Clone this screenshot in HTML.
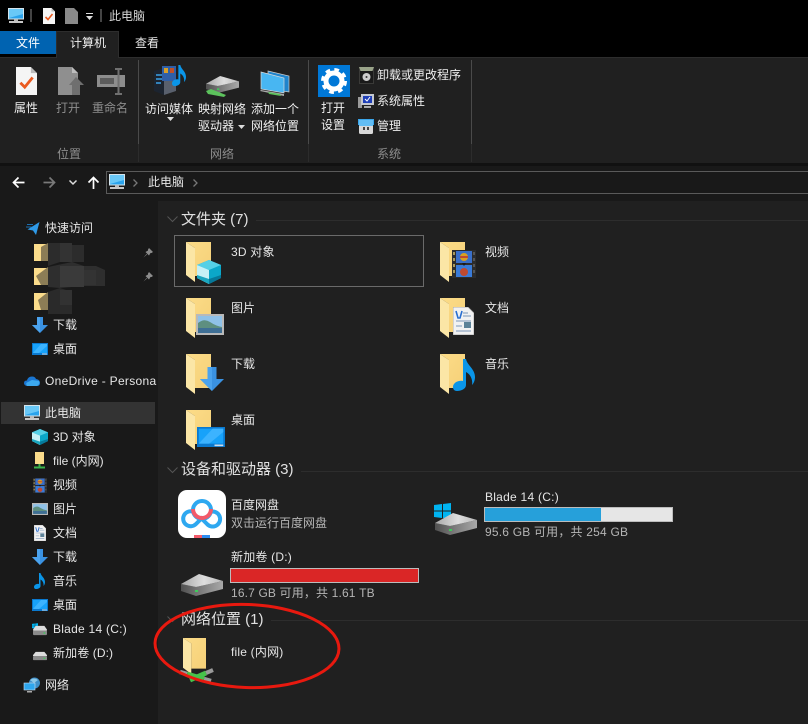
<!DOCTYPE html>
<html lang="zh"><head><meta charset="utf-8"><title>此电脑</title>
<style>
html,body{margin:0;padding:0;background:#191919;}
#r{position:relative;width:808px;height:724px;overflow:hidden;background:#191919;font-family:"Liberation Sans","Noto Sans CJK SC",sans-serif;font-size:12px;color:#e6e6e6;}
#r div{position:absolute;}
.t{line-height:16px;white-space:nowrap;}
.c{transform:translateX(-50%);text-align:center;}
.g{color:#8d8d8d;}
.h{font-size:15px;line-height:18px;white-space:nowrap;color:#e0e0e0;}
svg{position:absolute;overflow:visible;}
</style></head><body><div id="r">
<svg width="0" height="0" style="left:0;top:0">
<defs>
<linearGradient id="fg" x1="0" y1="0" x2="1" y2="1"><stop offset="0" stop-color="#fcdc88"/><stop offset="1" stop-color="#f5d078"/></linearGradient>
<linearGradient id="dt" x1="0" y1="0" x2="1" y2="0"><stop offset="0" stop-color="#a8a8a8"/><stop offset=".55" stop-color="#dedede"/><stop offset="1" stop-color="#b8b8b8"/></linearGradient>
<linearGradient id="df" x1="0" y1="0" x2="1" y2="0"><stop offset="0" stop-color="#505050"/><stop offset=".5" stop-color="#7e7e7e"/><stop offset="1" stop-color="#a8a8a8"/></linearGradient>
<symbol id="folder" viewBox="0 0 25 40" overflow="visible">
<path d="M0 0H25V34H9V6Z" fill="url(#fg)"/><path d="M0 0L9 6V40L0 33Z" fill="#fbe6a6"/>
</symbol>
<symbol id="mon" viewBox="0 0 16 16">
<rect x="0.5" y="0.5" width="15" height="10.5" fill="#2aa3ec" stroke="#d5e4ec"/><path d="M1 1H15V6L1 10Z" fill="#69c8f7"/><rect x="6" y="11" width="4" height="2" fill="#bbb"/><rect x="1" y="13" width="14" height="2" fill="#c8c8c8"/>
</symbol>
<symbol id="doc" viewBox="0 0 12 16">
<path d="M0 0H8.5L12 3.5V16H0Z" fill="#f5f5f5"/><path d="M8.5 0L12 3.5H8.5Z" fill="#bbb"/><path d="M2.5 9L5 11.5L9.5 6" fill="none" stroke="#ea5a20" stroke-width="1.6"/>
</symbol>
<symbol id="down" viewBox="0 0 16 16">
<path d="M5 0H11V8H16L8 16L0 8H5Z" fill="#3a92e2"/><path d="M5 0H8V16L0 8H5Z" fill="#4ba3ee"/>
</symbol>
<symbol id="desk" viewBox="0 0 16 12">
<rect width="16" height="12" fill="#0a79cf"/><rect x="1" y="1" width="14" height="9" fill="#17a2fa"/><path d="M9 1H15V3L7 10H1Z" fill="#3cb3ff"/><rect x="10" y="10.5" width="5" height="1" fill="#cde"/>
</symbol>
<symbol id="drive" viewBox="0 0 42 22">
<path d="M0 10V17L15 22L42 15V7L15 13Z" fill="url(#df)"/><path d="M0 10L18 0L42 7L15 13Z" fill="url(#dt)"/><rect x="14" y="16" width="3" height="2" fill="#3ecb5a"/>
</symbol>
<symbol id="cube" viewBox="0 0 24 24">
<path d="M12 0L24 5V18L12 24L0 18V5Z" fill="#0ba7c9"/><path d="M12 0L24 5L12 10L0 5Z" fill="#55d0e6"/><path d="M0 5L12 10V24L0 18Z" fill="#c6f1f6"/><path d="M12 19L24 15V18L12 24Z" fill="#06799a"/><path d="M0 15L12 19V24L0 18Z" fill="#1aa7c0"/>
</symbol>
<symbol id="pic" viewBox="0 0 28 21">
<rect width="28" height="21" fill="#b9b9b9"/><rect x="2" y="2" width="24" height="17" fill="#8fc1e8"/><path d="M2 9Q8 4 14 8T26 13V19H2Z" fill="#5e8f80"/><rect x="2" y="14" width="24" height="5" fill="#3f6f95"/>
</symbol>
<symbol id="film" viewBox="0 0 24 28">
<rect width="24" height="28" fill="#2c2c2c"/><rect x="4" y="1" width="16" height="12" fill="#3a6fc8"/><rect x="4" y="15" width="16" height="12" fill="#3a7bd8"/><circle cx="12" cy="7" r="4" fill="#d9a020"/><path d="M8 7H16" stroke="#c04a30" stroke-width="2"/><circle cx="12" cy="22" r="4" fill="#c04a30"/><path d="M10 13L12 16L14 13Z" fill="#1a1a1a"/><path d="M1 2h2v3H1zM1 8h2v3H1zM1 14h2v3H1zM1 20h2v3H1z" fill="#aa9a5c"/><path d="M21 2h2v3h-2zM21 8h2v3h-2zM21 14h2v3h-2zM21 20h2v3h-2z" fill="#555"/>
</symbol>
<symbol id="note" viewBox="0 0 22 32">
<path d="M10 0H13C14 6 22 10 22 18C22 21 21 24 19 26C20 20 17 15 13 13V26C13 30 8 32 4 32C1 32 0 30 0 28C0 24 5 21 10 22Z" fill="#0a95e8"/>
</symbol>
<symbol id="text" viewBox="0 0 21 28">
<path d="M0 0H15L21 6V28H0Z" fill="#f2f2f2" stroke="#999" stroke-width=".7"/><path d="M3 4L5 11H7L9 4" fill="none" stroke="#2a6fd0" stroke-width="1.6"/><path d="M10 6H15M10 9H18M3 14H18M3 24H18M3 19H9" stroke="#7a96b8"/><rect x="11" y="15" width="7" height="6" fill="#5c8298"/>
</symbol>
<symbol id="win" viewBox="0 0 17 16">
<path d="M0 2L8 1V7.500H0ZM9 1L17 0V7.500H9ZM0 8.500H8V15L0 14ZM9 8.500H17V16L9 15Z" fill="#00b4f1"/>
</symbol>
<symbol id="pin" viewBox="0 0 10 10">
<path d="M6 0L10 4L8.500 5L7.500 5L6 7.500L2.500 4L5 2.500V1.500Z M3.500 6L0.500 9.500L4 6.500Z" fill="#8c8c8c"/>
</symbol>
<symbol id="disk" viewBox="0 0 16 12">
<path d="M0 5L3 1H13L16 5V6H0Z" fill="#dcdcdc"/><rect y="6" width="16" height="5" rx="1" fill="#8a8a8a"/><rect x="12" y="8" width="2" height="1.500" fill="#3ecb5a"/>
</symbol>
</defs></svg>

<!-- title bar -->
<div style="left:0;top:0;width:808px;height:57px;background:#000"></div>
<svg style="left:8px;top:8px" width="16" height="16"><use href="#mon"/></svg>
<div style="left:30px;top:9px;width:2px;height:13px;background:#444"></div>
<svg style="left:43px;top:8px" width="12" height="16"><use href="#doc"/></svg>
<svg style="left:65px;top:8px" width="13" height="16"><path d="M0 0H9L13 4V16H0Z" fill="#8a8a8a"/></svg>
<div style="left:86px;top:13px;width:7px;height:1px;background:#ddd"></div>
<svg style="left:86px;top:16px" width="7" height="4"><path d="M0 0H7L3.500 4Z" fill="#ddd"/></svg>
<div style="left:100px;top:9px;width:2px;height:13px;background:#444"></div>
<div class="t" style="left:109px;top:8px;color:#d8d8d8">此电脑</div>
<!-- tabs -->
<div style="left:0;top:31px;width:56px;height:23px;background:#0063b1"></div>
<div class="t" style="left:16px;top:35px;color:#fff">文件</div>
<div style="left:56px;top:31px;width:63px;height:27px;background:#202020;border:1px solid #2d2d2d;border-bottom:0;box-sizing:border-box"></div>
<div class="t" style="left:70px;top:35px;color:#f0f0f0">计算机</div>
<div class="t" style="left:135px;top:35px;color:#e8e8e8">查看</div>
<!-- ribbon -->
<div style="left:0;top:57px;width:808px;height:108px;background:#202020;border-top:1px solid #2d2d2d;box-sizing:border-box"></div>
<div style="left:57px;top:57px;width:61px;height:1px;background:#202020"></div>
<div style="left:0;top:163px;width:808px;height:3px;background:#111"></div>
<div style="left:138px;top:60px;width:1px;height:84px;background:#4a4a4a"></div>
<div style="left:138px;top:144px;width:1px;height:18px;background:#2c2c2c"></div>
<div style="left:308px;top:60px;width:1px;height:84px;background:#4a4a4a"></div>
<div style="left:308px;top:144px;width:1px;height:18px;background:#2c2c2c"></div>
<div style="left:471px;top:60px;width:1px;height:84px;background:#4a4a4a"></div>
<div style="left:471px;top:144px;width:1px;height:18px;background:#2c2c2c"></div>

<svg style="left:16px;top:67px" width="21" height="28" viewBox="0 0 12 16" preserveAspectRatio="none"><use href="#doc" width="12" height="16"/></svg>
<div class="t c" style="left:26px;top:100px;color:#eee">属性</div>
<svg style="left:58px;top:67px" width="27" height="29"><path d="M0 0H14L20 6V28H0Z" fill="#8f8f8f"/><path d="M14 0L20 6H14Z" fill="#bdbdbd"/><path d="M11 18L18 10L26 18H22V28H14V18Z" fill="#6f6f6f"/></svg>
<div class="t c g" style="left:68px;top:100px">打开</div>
<svg style="left:97px;top:68px" width="29" height="27"><rect y="7" width="28" height="12" fill="#8d8d8d"/><rect x="3" y="10" width="14" height="6" fill="#5c5c5c"/><path d="M18 1H25M21.500 1V26M18 26H25" stroke="#707070" stroke-width="2" fill="none"/></svg>
<div class="t c g" style="left:110px;top:100px">重命名</div>

<svg style="left:154px;top:65px" width="32" height="31"><path d="M0 6L10 3V30L0 26Z" fill="#1c2430"/><path d="M10 3L22 8V26L10 30Z" fill="#59606d"/><path d="M2 10H8M2 14H8M2 18H7" stroke="#3aa2e8" stroke-width="1.500"/><rect x="8" y="1" width="14" height="15" fill="#2e5fa8"/><rect x="10" y="3" width="4" height="5" fill="#d8a028"/><rect x="16" y="3" width="4" height="5" fill="#c05028"/><svg x="18" y="0" width="14" height="21" viewBox="0 0 22 32" preserveAspectRatio="none"><use href="#note" width="22" height="32"/></svg></svg>
<div class="t c" style="left:169px;top:101px;color:#eee">访问媒体</div>
<svg style="left:167px;top:117px" width="7" height="4"><path d="M0 0H7L3.500 4Z" fill="#ddd"/></svg>

<svg style="left:206px;top:76px" width="33" height="21"><svg width="33" height="17" viewBox="0 0 42 22" preserveAspectRatio="none"><use href="#drive" width="42" height="22"/></svg><path d="M0 15L5 13L20 19L18 21L2 18Z" fill="#5cc25c"/></svg>
<div class="t c" style="left:222px;top:101px;color:#eee">映射网络</div>
<div class="t" style="left:198px;top:118px;color:#eee">驱动器</div>
<svg style="left:238px;top:125px" width="7" height="4"><path d="M0 0H7L3.500 4Z" fill="#ddd"/></svg>

<svg style="left:260px;top:70px" width="30" height="26"><path d="M8 1L29 6V22L8 19Z" fill="#1f84cc" stroke="#ccc" stroke-width=".7"/><path d="M1 2L24 8V23L1 19Z" fill="#48b6f2" stroke="#d8d8d8" stroke-width=".7"/><path d="M1 20L24 24V26L0 21Z" fill="#aaa"/><path d="M8 22L20 24L21 26L9 24Z" fill="#5cc25c"/></svg>
<div class="t c" style="left:275px;top:101px;color:#eee">添加一个</div>
<div class="t c" style="left:275px;top:118px;color:#eee">网络位置</div>

<div class="t c g" style="left:69px;top:146px">位置</div>
<div class="t c g" style="left:222px;top:146px">网络</div>
<div class="t c g" style="left:389px;top:146px">系统</div>

<div style="left:318px;top:65px;width:32px;height:32px;background:#0078d7"></div>
<svg style="left:318px;top:65px" width="32" height="32"><circle cx="16" cy="16" r="8" fill="none" stroke="#fff" stroke-width="5"/><circle cx="16" cy="16" r="11" fill="none" stroke="#fff" stroke-width="4" stroke-dasharray="4.500 4.140"/></svg>
<div class="t c" style="left:333px;top:100px;color:#f0f0f0">打开</div>
<div class="t c" style="left:333px;top:117px;color:#f0f0f0">设置</div>
<svg style="left:359px;top:67px" width="15" height="17"><rect width="15" height="17" fill="#3a3a38"/><path d="M0 0H15L13 5H2Z" fill="#9aa48a"/><rect x="1" y="4" width="13" height="12" fill="#1a1a1a"/><circle cx="7.500" cy="10" r="4" fill="#ccc"/><circle cx="7.500" cy="10" r="1" fill="#333"/></svg>
<div class="t" style="left:377px;top:67px;color:#eee">卸载或更改程序</div>
<svg style="left:358px;top:94px" width="16" height="15"><rect x="0" y="3" width="4" height="11" fill="#9a9a9a"/><rect x="3" y="0" width="13" height="11" fill="#c4c8d0"/><rect x="5" y="2" width="9" height="7" fill="#1f3fb8"/><path d="M7 5L9 7L12 3" stroke="#fff" fill="none"/><rect x="6" y="12" width="7" height="2" fill="#aaa"/></svg>
<div class="t" style="left:377px;top:93px;color:#eee">系统属性</div>
<svg style="left:358px;top:119px" width="16" height="15"><rect width="16" height="6" fill="#3aa5ea"/><rect x="1" y="5" width="14" height="10" rx="1.500" fill="#d8d8d8"/><rect x="1" y="1" width="14" height="6" fill="#62bdf4"/><rect x="5" y="8" width="2" height="3" fill="#444"/><rect x="9" y="8" width="2" height="3" fill="#444"/></svg>
<div class="t" style="left:377px;top:118px;color:#eee">管理</div>

<!-- nav bar -->
<svg style="left:12px;top:176px" width="13" height="13"><path d="M12.500 6.500H2M6.500 1.500L1.500 6.500L6.500 11.500" fill="none" stroke="#fff" stroke-width="1.700"/></svg>
<svg style="left:43px;top:176px" width="13" height="13"><path d="M0.500 6.500H11M6.500 1.500L11.500 6.500L6.500 11.500" fill="none" stroke="#7a7a7a" stroke-width="1.700"/></svg>
<svg style="left:69px;top:180px" width="8" height="5"><path d="M0.500 0.500L4 4L7.500 0.500" fill="none" stroke="#ddd" stroke-width="1.500"/></svg>
<svg style="left:87px;top:176px" width="13" height="13"><path d="M6.500 13V2M1.500 6.500L6.500 1.500L11.500 6.500" fill="none" stroke="#fff" stroke-width="1.700"/></svg>
<div style="left:106px;top:171px;width:703px;height:23px;background:#191919;border:1px solid #5a5a5a;box-sizing:border-box"></div>
<svg style="left:109px;top:174px" width="16" height="16"><use href="#mon"/></svg>
<svg style="left:133px;top:179px" width="5" height="8"><path d="M0.500 0.500L4 4L0.500 7.500" fill="none" stroke="#777" stroke-width="1.300"/></svg>
<div class="t" style="left:148px;top:174px">此电脑</div>
<svg style="left:193px;top:179px" width="5" height="8"><path d="M0.500 0.500L4 4L0.500 7.500" fill="none" stroke="#777" stroke-width="1.300"/></svg>

<!-- content bg -->
<div style="left:158px;top:201px;width:650px;height:523px;background:#202020"></div>

<!-- sidebar -->
<svg style="left:26px;top:222px" width="14" height="13"><path d="M13.500 0L10 13L7 8.500L1.500 7.500Z" fill="#2f9ae8"/><path d="M7 2.500H1M5.500 5H0" stroke="#1d6fb0"/></svg>
<div class="t" style="left:45px;top:220px">快速访问</div>

<!-- pixelated redaction -->
<svg style="left:0;top:0" width="110" height="320">
<path d="M34 244H48V261H34ZM34 268H48V285H34ZM34 293H48V310H34Z" fill="#fbdc8b"/>
<path d="M48 243L41 247V261H48ZM48 267L36 276L41 285H48ZM48 292L38 300L41 310H48Z" fill="#8c7d56"/>
<path d="M48 243H72V245H84V262H60L48 266Z" fill="#2c2c2c"/>
<path d="M60 243H72V262H60Z" fill="#333"/>
<path d="M48 267L72 262L84 266H96L105 270V286H84L60 288L48 287Z" fill="#2e2e2e"/>
<path d="M60 266H84V287H60Z" fill="#3a3a3a"/>
<path d="M84 270H96V285H84Z" fill="#333"/>
<path d="M48 292L60 288L72 292V314H48Z" fill="#2a2a2a"/>
<path d="M60 290H72V305H60Z" fill="#323232"/>
</svg>

<svg style="left:143px;top:248px" width="10" height="10"><use href="#pin"/></svg>
<svg style="left:143px;top:272px" width="10" height="10"><use href="#pin"/></svg>
<svg style="left:32px;top:317px" width="16" height="16"><use href="#down"/></svg>
<div class="t" style="left:53px;top:317px">下载</div>
<svg style="left:32px;top:343px" width="16" height="12"><use href="#desk"/></svg>
<div class="t" style="left:53px;top:341px">桌面</div>
<svg style="left:24px;top:375px" width="16" height="11"><path d="M3 11Q0 10.500 0 8Q0 5.500 3 5.500Q4 1.500 8 1.500Q11 1.500 12 4Q16 4.500 16 8Q16 11 13 11Z" fill="#1a76d2"/><path d="M3 11Q1 8 4 7L8 5L15 6Q16.500 9 13 11Z" fill="#3ca8ee"/></svg>
<div class="t" style="left:45px;top:373px;width:112px;overflow:hidden;letter-spacing:.3px">OneDrive - Personal</div>
<div style="left:1px;top:402px;width:154px;height:22px;background:#333"></div>
<svg style="left:24px;top:405px" width="16" height="16"><use href="#mon"/></svg>
<div class="t" style="left:45px;top:405px">此电脑</div>
<svg style="left:32px;top:429px" width="16" height="16"><use href="#cube"/></svg>
<div class="t" style="left:53px;top:429px">3D 对象</div>
<svg style="left:34px;top:452px" width="12" height="17"><rect x="1" y="0" width="9" height="12" fill="#fbdc8b"/><path d="M5.500 12V15M0 15.500H11" stroke="#3cb44a" stroke-width="2"/></svg>
<div class="t" style="left:53px;top:453px">file (内网)</div>
<svg style="left:33px;top:478px" width="14" height="15" viewBox="0 0 24 28" preserveAspectRatio="none"><use href="#film" width="24" height="28"/></svg>
<div class="t" style="left:53px;top:477px">视频</div>
<svg style="left:32px;top:503px" width="16" height="12" viewBox="0 0 28 21" preserveAspectRatio="none"><use href="#pic" width="28" height="21"/></svg>
<div class="t" style="left:53px;top:501px">图片</div>
<svg style="left:34px;top:525px" width="12" height="16" viewBox="0 0 21 28" preserveAspectRatio="none"><use href="#text" width="21" height="28"/></svg>
<div class="t" style="left:53px;top:525px">文档</div>
<svg style="left:32px;top:549px" width="16" height="16"><use href="#down"/></svg>
<div class="t" style="left:53px;top:549px">下载</div>
<svg style="left:34px;top:573px" width="11" height="16" viewBox="0 0 22 32" preserveAspectRatio="none"><use href="#note" width="22" height="32"/></svg>
<div class="t" style="left:53px;top:573px">音乐</div>
<svg style="left:32px;top:599px" width="16" height="12"><use href="#desk"/></svg>
<div class="t" style="left:53px;top:597px">桌面</div>
<svg style="left:32px;top:623px" width="6" height="6" viewBox="0 0 17 16"><use href="#win" width="17" height="16"/></svg>
<svg style="left:33px;top:625px" width="14" height="11" viewBox="0 0 16 12" preserveAspectRatio="none"><use href="#disk" width="16" height="12"/></svg>
<div class="t" style="left:53px;top:621px;letter-spacing:.25px">Blade 14 (C:)</div>
<svg style="left:33px;top:651px" width="14" height="10" viewBox="0 0 16 12" preserveAspectRatio="none"><use href="#disk" width="16" height="12"/></svg>
<div class="t" style="left:53px;top:645px;letter-spacing:.1px">新加卷 (D:)</div>
<svg style="left:24px;top:677px" width="17" height="16"><circle cx="10.500" cy="6" r="5.500" fill="#3f8fc8"/><path d="M6 3Q10 0 14 3L10 6Z" fill="#8cc8e8"/><rect x="0" y="6" width="11" height="7" fill="#2ea6ee" stroke="#cde" stroke-width=".6"/><rect x="3" y="14" width="5" height="1.500" fill="#aaa"/></svg>
<div class="t" style="left:45px;top:677px">网络</div>

<!-- group 1 -->
<svg style="left:167px;top:216px" width="11" height="7"><path d="M0.500 0.500L5.500 5.500L10.500 0.500" fill="none" stroke="#555" stroke-width="1"/></svg>
<div class="h" style="left:181px;top:211px">文件夹 (7)</div>
<div style="left:256px;top:220px;width:552px;height:1px;background:#2d2d2d"></div>
<div style="left:174px;top:235px;width:250px;height:52px;border:1px solid #6a6a6a;box-sizing:border-box"></div>

<svg style="left:186px;top:242px" width="25" height="40"><use href="#folder"/></svg>
<svg style="left:197px;top:260px" width="24" height="24"><use href="#cube"/></svg>
<div class="t" style="left:231px;top:244px;letter-spacing:.2px">3D 对象</div>

<svg style="left:186px;top:298px" width="25" height="40"><use href="#folder"/></svg>
<svg style="left:196px;top:314px" width="28" height="21"><use href="#pic"/></svg>
<div class="t" style="left:231px;top:300px">图片</div>

<svg style="left:186px;top:354px" width="25" height="40"><use href="#folder"/></svg>
<svg style="left:200px;top:367px" width="24" height="24" viewBox="0 0 16 16"><use href="#down" width="16" height="16"/></svg>
<div class="t" style="left:231px;top:356px">下载</div>

<svg style="left:186px;top:410px" width="25" height="40"><use href="#folder"/></svg>
<svg style="left:197px;top:427px" width="28" height="20" viewBox="0 0 16 12" preserveAspectRatio="none"><use href="#desk" width="16" height="12"/></svg>
<div class="t" style="left:231px;top:412px">桌面</div>

<svg style="left:440px;top:242px" width="25" height="40"><use href="#folder"/></svg>
<svg style="left:452px;top:250px" width="24" height="28"><use href="#film"/></svg>
<div class="t" style="left:485px;top:244px">视频</div>

<svg style="left:440px;top:298px" width="25" height="40"><use href="#folder"/></svg>
<svg style="left:453px;top:307px" width="21" height="28"><use href="#text"/></svg>
<div class="t" style="left:485px;top:300px">文档</div>

<svg style="left:440px;top:354px" width="25" height="40"><use href="#folder"/></svg>
<svg style="left:453px;top:359px" width="22" height="32"><use href="#note"/></svg>
<div class="t" style="left:485px;top:356px">音乐</div>

<!-- group 2 -->
<svg style="left:167px;top:467px" width="11" height="7"><path d="M0.500 0.500L5.500 5.500L10.500 0.500" fill="none" stroke="#555" stroke-width="1"/></svg>
<div class="h" style="left:181px;top:461px">设备和驱动器 (3)</div>
<div style="left:301px;top:471px;width:507px;height:1px;background:#2d2d2d"></div>

<svg style="left:178px;top:490px" width="48" height="48"><rect width="48" height="48" rx="9" fill="#fff"/><path d="M16 22A7.500 7.500 0 1 0 18 34L23.500 28.500L29 34A7.500 7.500 0 1 0 32 22" fill="none" stroke="#2ea8f0" stroke-width="4"/><circle cx="24" cy="20" r="9" fill="none" stroke="#2ea8f0" stroke-width="4"/><path d="M15 19A9 9 0 0 0 33 19" fill="none" stroke="#f25a6a" stroke-width="4"/><rect x="16" y="45" width="8" height="3" fill="#f25a6a"/><rect x="24" y="45" width="8" height="3" fill="#2c8cf0"/></svg>
<div class="t" style="left:231px;top:497px">百度网盘</div>
<div class="t" style="left:231px;top:515px;color:#b5b5b5">双击运行百度网盘</div>

<svg style="left:434px;top:503px" width="17" height="16"><use href="#win"/></svg>
<svg style="left:435px;top:513px" width="42" height="22"><use href="#drive"/></svg>
<div class="t" style="left:485px;top:489px;letter-spacing:.25px">Blade 14 (C:)</div>
<div style="left:484px;top:507px;width:189px;height:15px;background:#e6e6e6;border:1px solid #bcbcbc;box-sizing:border-box"></div>
<div style="left:485px;top:508px;width:116px;height:13px;background:#26a0da"></div>
<div class="t" style="left:485px;top:524px;color:#b5b5b5;letter-spacing:.2px">95.6 GB 可用，共 254 GB</div>

<svg style="left:181px;top:574px" width="42" height="22"><use href="#drive"/></svg>
<div class="t" style="left:231px;top:549px;letter-spacing:.2px">新加卷 (D:)</div>
<div style="left:230px;top:568px;width:189px;height:15px;background:#da2626;border:1px solid #bcbcbc;box-sizing:border-box"></div>
<div class="t" style="left:231px;top:585px;color:#b5b5b5;letter-spacing:.15px">16.7 GB 可用，共 1.61 TB</div>

<!-- group 3 -->
<svg style="left:167px;top:616px" width="11" height="7"><path d="M0.500 0.500L5.500 5.500L10.500 0.500" fill="none" stroke="#555" stroke-width="1"/></svg>
<div class="h" style="left:181px;top:611px">网络位置 (1)</div>
<div style="left:271px;top:620px;width:537px;height:1px;background:#2d2d2d"></div>
<svg style="left:183px;top:638px" width="23" height="36" viewBox="0 0 25 40" preserveAspectRatio="none"><use href="#folder" width="25" height="40"/></svg>
<svg style="left:178px;top:667px" width="36" height="16"><path d="M2 5L9 7M26 12L33 14" stroke="#9a9a9a" stroke-width="4.500"/><path d="M9 7L26 12" stroke="#46c24a" stroke-width="5"/><path d="M12 13L28 6" stroke="#46c24a" stroke-width="5"/><path d="M28 6L35 3" stroke="#9a9a9a" stroke-width="4"/></svg>
<div class="t" style="left:231px;top:644px;letter-spacing:.2px">file (内网)</div>

<!-- annotation -->
<svg style="left:0;top:0" width="808" height="724"><ellipse cx="247" cy="646" rx="92" ry="41.500" fill="none" stroke="#e8190f" stroke-width="3" transform="rotate(2 247 646)"/></svg>
</div></body></html>
